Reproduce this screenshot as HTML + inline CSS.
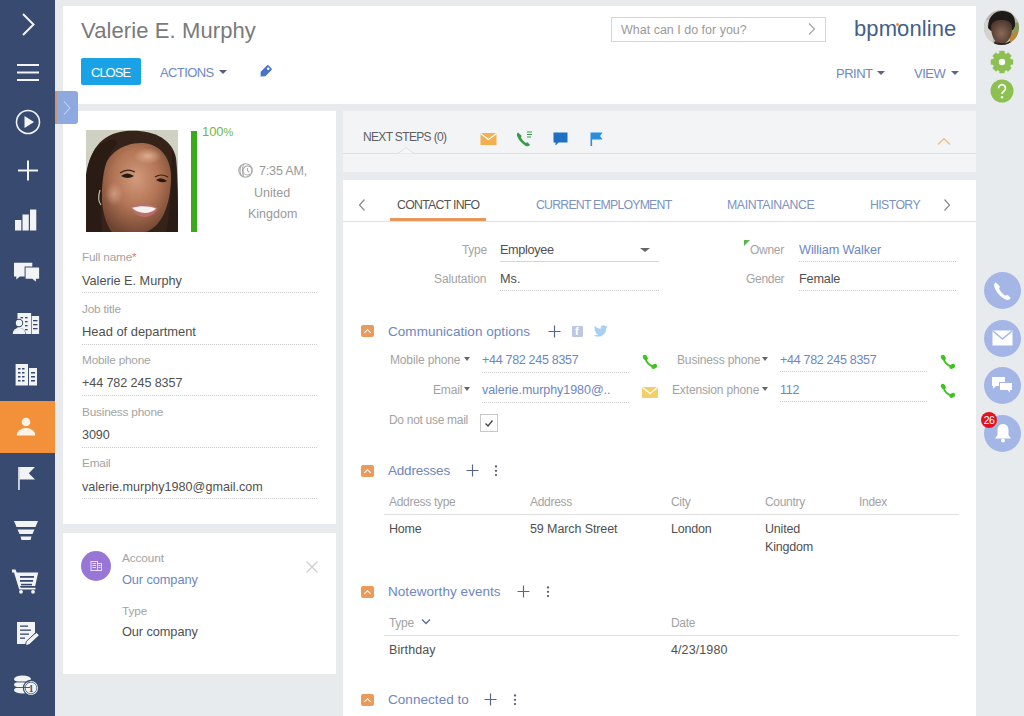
<!DOCTYPE html>
<html><head><meta charset="utf-8">
<style>
*{box-sizing:border-box;margin:0;padding:0}
html,body{width:1024px;height:716px;overflow:hidden}
body{background:#e8ebee;font-family:"Liberation Sans",sans-serif;position:relative;color:#444}
.abs{position:absolute}
.t{position:absolute;white-space:nowrap;line-height:1}
#sb{left:0;top:0;width:55px;height:716px;background:#384a6f}
.panel{position:absolute;background:#fff}
.lbl{color:#a3a3a3}
.val{color:#505050}
.lnk{color:#6d87bf}
.dot{position:absolute;height:1px;background-image:linear-gradient(90deg,#c9c9c9 50%,transparent 50%);background-size:2px 1px}
.sol{position:absolute;height:1px;background:#d8d8d8}
.oic{position:absolute;width:13px;height:12px;background:#ea9a5b;border-radius:2px}
.oic:after{content:"";position:absolute;left:4px;top:4.5px;width:4px;height:4px;border-left:1.3px solid #fff;border-top:1.3px solid #fff;transform:rotate(45deg)}
.caret{position:absolute;width:0;height:0;border-left:4px solid transparent;border-right:4px solid transparent;border-top:4px solid #777}
</style></head><body>

<!-- sidebar -->
<div id="sb" class="abs"></div>
<div class="abs" style="left:0;top:401px;width:55px;height:52px;background:#f3913b"></div>
<svg class="abs" style="left:0;top:0" width="55" height="716" viewBox="0 0 55 716">
<g fill="none" stroke="#f2f3f5" stroke-width="2">
<polyline points="23,14 33.5,24.5 23,35"/>
<line x1="17" y1="65" x2="39" y2="65"/><line x1="17" y1="72.5" x2="39" y2="72.5"/><line x1="17" y1="80" x2="39" y2="80"/>
<circle cx="28" cy="122" r="11.5" stroke-width="1.6"/>
<line x1="18" y1="170.5" x2="38" y2="170.5"/><line x1="28" y1="160.5" x2="28" y2="180.5"/>
</g>
<g fill="#f2f3f5">
<polygon points="24.5,116 34,122 24.5,128"/>
<rect x="15" y="220" width="6.3" height="10.5"/><rect x="22.5" y="214.5" width="6.3" height="16"/><rect x="30" y="209.5" width="6.3" height="21"/>
<!-- chat -->
<path d="M14,262.7 h18.3 v13.7 h-12.5 l-3.5,3 v-3 h-2.3z"/>
<path d="M24.6,266.5 h15.5 v13.2 h-3.2 v3 l-3.5,-3 h-8.8z" fill="#384a6f"/>
<path d="M25.6,267.5 h13.5 v11.2 h-3.2 v3 l-3.5,-3 h-6.8z"/>
<!-- contacts -->
<rect x="17.5" y="313" width="13.6" height="21"/><rect x="31.7" y="316" width="7.4" height="18"/>
<circle cx="19" cy="323" r="4.2" fill="#384a6f"/>
<path d="M11.8,335 a7.2,7.2 0 0 1 14.4,0z" fill="#384a6f"/>
<circle cx="19" cy="323" r="3.2"/>
<path d="M12.8,334 a6.2,6.2 0 0 1 12.4,0z"/>
<!-- buildings -->
<rect x="15.6" y="364" width="12.5" height="21.5"/><rect x="29" y="368" width="8" height="17.5"/>
<!-- flag -->
<rect x="18.2" y="467" width="1.5" height="23"/>
<polygon points="19.5,467 35,467 28.8,473.2 35,479.5 19.5,479.5"/>
<!-- funnel -->
<polygon points="14,521 38,521 35.5,527 16.5,527"/>
<polygon points="17.5,529.5 34.5,529.5 32.5,534 19.5,534"/>
<polygon points="20.5,536.5 31.5,536.5 30.5,540 21.5,540"/>
<!-- cart -->
<path d="M12,569.5 h3.5 l1.2,3 h21.5 l-3,13.5 h-15.2 l0.7,1.8 h14.8 v1.7 h-16.3 l-5.2,-17 h-2z"/>
<circle cx="21" cy="591.8" r="1.9"/><circle cx="33" cy="591.8" r="1.9"/>
<!-- doc -->
<path d="M17,622 h18 v12 l-8,9 v1 h-10z"/>
<path d="M26,645.5 l1.2,-3.8 9.5,-9 2.4,2.4 -9.5,9z"/>
<!-- coins -->
<ellipse cx="22.5" cy="679" rx="8.5" ry="3.6"/><ellipse cx="22.5" cy="684.5" rx="8.5" ry="3.6"/><ellipse cx="22.5" cy="690" rx="8.5" ry="3.6"/>
<circle cx="31" cy="688" r="8.2" fill="#384a6f"/>
<circle cx="31" cy="688" r="7"/>
</g>
<g fill="#384a6f">
<rect x="20.5" y="317" width="2.6" height="1.3"/><rect x="25" y="317" width="2.6" height="1.3"/><rect x="25" y="321" width="2.6" height="1.3"/><rect x="25" y="325" width="2.6" height="1.3"/><rect x="25" y="329" width="2.6" height="1.3"/>
<rect x="33" y="320" width="4.5" height="1.3"/><rect x="33" y="324" width="4.5" height="1.3"/><rect x="33" y="328" width="4.5" height="1.3"/>
<rect x="18" y="368" width="2.5" height="1.5"/><rect x="22" y="368" width="2.5" height="1.5"/><rect x="18" y="372" width="2.5" height="1.5"/><rect x="22" y="372" width="2.5" height="1.5"/><rect x="18" y="376" width="2.5" height="1.5"/><rect x="22" y="376" width="2.5" height="1.5"/><rect x="18" y="380" width="2.5" height="1.5"/><rect x="22" y="380" width="2.5" height="1.5"/>
<rect x="31" y="372" width="4" height="1.5"/><rect x="31" y="376" width="4" height="1.5"/><rect x="31" y="380" width="4" height="1.5"/>
<rect x="28.1" y="364" width="0.9" height="21.5"/>
<rect x="20" y="576" width="14" height="1.8"/><rect x="20" y="580" width="13" height="1.8"/><rect x="21" y="583.8" width="11" height="1.6"/>
<rect x="20" y="625.5" width="8" height="1.3"/><rect x="20" y="629.5" width="11" height="1.3"/><rect x="20" y="633.5" width="9" height="1.3"/><rect x="20" y="637.5" width="5" height="1.3"/>
<path d="M25.2,646 l1.2,-4.6 9.8,-9.4 3.4,3.4 -9.8,9.4z" fill="none" stroke="#384a6f" stroke-width="0.9"/>
<rect x="14" y="681.5" width="16" height="0.9"/><rect x="14" y="687" width="16" height="0.9"/>
</g>
<circle cx="31" cy="688" r="5.8" fill="none" stroke="#384a6f" stroke-width="0.7"/><text x="31" y="691.5" font-family="Liberation Serif" font-size="9.5" font-weight="bold" fill="#384a6f" text-anchor="middle">1</text>
<g fill="#fbf3ea">
<circle cx="26" cy="422" r="4.3"/>
<path d="M16.7,435.6 a9.3,7.5 0 0 1 18.6,0z"/>
</g>
</svg>


<!-- header panel -->
<div class="panel" style="left:63px;top:6px;width:913px;height:98px"></div>
<div class="t" style="left:81px;top:20px;font-size:22px;color:#7a7a7a;letter-spacing:0.1px">Valerie E. Murphy</div>
<div class="abs" style="left:81px;top:58px;width:60px;height:27px;background:#1aa2e6;border-radius:2px"></div>
<div class="t" style="left:91px;top:66px;font-size:13px;color:#fff;letter-spacing:-1px">CLOSE</div>
<div class="t" style="left:160px;top:66px;font-size:13px;color:#6f88bd;letter-spacing:-0.6px">ACTIONS</div>
<div class="caret" style="left:219px;top:70px;border-top-color:#585f74"></div>
<svg class="abs" style="left:257px;top:63px" width="17" height="17" viewBox="0 0 17 17"><g transform="rotate(45 8.5 8.5)"><path d="M5.2,3.5 a1.5,1.5 0 0 1 1.5,-1.5 h3.6 a1.5,1.5 0 0 1 1.5,1.5 v8.5 l-3.3,3.5 -3.3,-3.5z" fill="#4a72c8"/></g><circle cx="11.2" cy="5.8" r="1.3" fill="#fff"/></svg>
<!-- search -->
<div class="abs" style="left:611px;top:17px;width:215px;height:25px;border:1px solid #d6d6d6"></div>
<div class="t" style="left:621px;top:24px;font-size:12.5px;color:#9a9a9a;letter-spacing:0px">What can I do for you?</div>
<svg class="abs" style="left:806px;top:22px" width="12" height="14" viewBox="0 0 12 14"><polyline points="3,1.5 8.5,7 3,12.5" fill="none" stroke="#a5a5a5" stroke-width="1.2"/></svg>
<div class="t" style="left:854px;top:18px;font-size:22px;color:#43608a;letter-spacing:0.1px">bpmonline</div>
<div class="abs" style="left:896px;top:23px;width:3px;height:3px;border-radius:50%;background:#f0913e"></div>
<div class="t" style="left:836px;top:67px;font-size:13px;color:#6f88bd;letter-spacing:-0.5px">PRINT</div>
<div class="caret" style="left:877px;top:71px;border-top-color:#5f6678"></div>
<div class="t" style="left:914px;top:67px;font-size:13px;color:#6f88bd;letter-spacing:-0.5px">VIEW</div>
<div class="caret" style="left:951px;top:71px;border-top-color:#5f6678"></div>

<!-- right column -->
<svg class="abs" style="left:984px;top:10px" width="35" height="35" viewBox="0 0 35 35"><defs><clipPath id="ac"><circle cx="17.5" cy="17.5" r="17.5"/></clipPath><radialGradient id="af" cx="0.5" cy="0.55" r="0.6"><stop offset="0" stop-color="#8a6a5a"/><stop offset="1" stop-color="#4a342a"/></radialGradient></defs><g clip-path="url(#ac)"><rect width="35" height="35" fill="#b8b6ae"/><rect x="0" y="10" width="9" height="25" fill="#d4d2cc"/><path d="M27,14 L35,12 L35,35 L27,35z" fill="#8a9a5a"/><path d="M26,24 L33,22 L33,32 L26,34z" fill="#b8883a"/><path d="M4,18 C4,5 12,1 18,1 C27,1 32,6 31,16 L29,20 L7,21z" fill="#1e1a18"/><path d="M7,16 C8,11 13,10 18,10 C24,10 28,12 28,18 C28,27 24,33 18,34 C12,34 7,28 7,16z" fill="url(#af)"/><path d="M9,35 L11,31 C14,34 22,34 26,31 L28,35z" fill="#2a2422"/></g></svg>
<svg class="abs" style="left:990px;top:50px" width="24" height="24" viewBox="0 0 24 24"><g fill="#8cc152"><circle cx="12" cy="12" r="9.3"/><rect x="9.3" y="0.8" width="5.4" height="22.4" rx="0.8"/><rect x="0.8" y="9.3" width="22.4" height="5.4" rx="0.8"/><rect x="9.3" y="0.8" width="5.4" height="22.4" rx="0.8" transform="rotate(45 12 12)"/><rect x="9.3" y="0.8" width="5.4" height="22.4" rx="0.8" transform="rotate(-45 12 12)"/></g><circle cx="12" cy="12" r="3.2" fill="#fff"/></svg>
<svg class="abs" style="left:990px;top:79px" width="24" height="24" viewBox="0 0 24 24"><circle cx="12" cy="12" r="11.5" fill="#8cc152"/><path d="M8.5,9.2 a3.5,3.5 0 1 1 5.3,3 c-1.1,0.7 -1.8,1.3 -1.8,2.8" fill="none" stroke="#fff" stroke-width="1.7"/><circle cx="12" cy="18.3" r="1.2" fill="#fff"/></svg>

<!-- left card 1 -->
<div class="panel" style="left:63px;top:111px;width:273px;height:413px"></div>
<svg class="abs" style="left:86px;top:130px" width="92" height="102" viewBox="0 0 92 102">
<defs>
<radialGradient id="fg" cx="0.5" cy="0.4" r="0.65"><stop offset="0" stop-color="#d29a7c"/><stop offset="0.5" stop-color="#b27555"/><stop offset="1" stop-color="#6e4230"/></radialGradient>
<radialGradient id="hl" cx="0.5" cy="0.5" r="0.5"><stop offset="0" stop-color="#e8b8a0" stop-opacity="0.8"/><stop offset="1" stop-color="#e8b8a0" stop-opacity="0"/></radialGradient>
</defs>
<rect width="92" height="102" fill="#cfd1c2"/>
<path d="M0,102 L0,50 C3,20 14,4 40,1 C66,-1 86,8 90,28 C92,45 92,75 92,102z" fill="#35231a"/>
<path d="M16,48 C18,26 34,13 56,13 C76,14 86,30 85,50 C84,76 76,96 60,102 L26,102 C18,92 14,72 16,48z" fill="url(#fg)"/>
<ellipse cx="62" cy="26" rx="14" ry="8" fill="url(#hl)"/>
<ellipse cx="28" cy="64" rx="9" ry="12" fill="url(#hl)" opacity="0.7"/>
<path d="M0,102 L0,45 C3,25 10,14 24,10 C30,9 34,12 28,18 C18,30 14,50 16,102z" fill="#2a1b14"/>
<path d="M86,20 C90,30 92,50 92,102 L80,102 C84,85 86,60 86,20z" fill="#2a1b14"/>
<path d="M35,46 q6,-5 13,0 q-6,4 -13,0z" fill="#2a1812"/><path d="M34,43 q7,-5 15,-1" fill="none" stroke="#3a2418" stroke-width="1.2"/>
<path d="M70,50 q5,-4 11,1 q-5,3 -11,-1z" fill="#2a1812"/><path d="M69,47 q6,-4 13,0" fill="none" stroke="#3a2418" stroke-width="1.2"/>
<path d="M44,77 C52,73 64,73 72,78 C67,90 50,90 44,77z" fill="#b8706a"/>
<path d="M46,77.8 C53,75.5 63,75.5 70,78.5 C65,84.5 52,84.5 46,77.8z" fill="#f6f0ee"/>
<path d="M14,60 q-3,10 1,15" fill="none" stroke="#c8beb0" stroke-width="1.2"/>
</svg>

<div class="abs" style="left:191px;top:131px;width:6px;height:101px;background:#3aaa1c"></div>
<div class="t" style="left:202px;top:125px;font-size:13px;color:#72b84a;letter-spacing:-0.1px">100<span style="font-size:11px">%</span></div>
<svg class="abs" style="left:238px;top:163px" width="16" height="15" viewBox="0 0 16 15"><g fill="none" stroke="#a9a9a9" stroke-width="1.1"><circle cx="7.5" cy="7.5" r="6.7"/><path d="M3,3 q-2,4.5 0,9 M5.5,1.5 q-2,6 0,12"/><circle cx="9.5" cy="7.5" r="4.5"/><path d="M9.5,5 v2.8 l1.8,1.2"/></g></svg>
<div class="t" style="left:259px;top:165px;font-size:12.5px;color:#999;letter-spacing:-0.15px">7:35 AM,</div>
<div class="t" style="left:254px;top:186.5px;font-size:12.5px;color:#999">United</div>
<div class="t" style="left:248px;top:208px;font-size:12.5px;color:#999">Kingdom</div>

<div class="t lbl" style="left:82px;top:252.3px;font-size:11.8px;letter-spacing:-0.2px">Full name<span style="color:#e07a7a">*</span></div>
<div class="t val" style="left:82px;top:274.5px;font-size:12.7px;letter-spacing:0px">Valerie E. Murphy</div>
<div class="dot" style="left:82px;top:292px;width:236px"></div>
<div class="t lbl" style="left:82px;top:303.6px;font-size:11.8px;letter-spacing:-0.2px">Job title</div>
<div class="t val" style="left:82px;top:325.6px;font-size:12.9px;letter-spacing:0px">Head of department</div>
<div class="dot" style="left:82px;top:344px;width:236px"></div>
<div class="t lbl" style="left:82px;top:355.2px;font-size:11.8px;letter-spacing:-0.2px">Mobile phone</div>
<div class="t val" style="left:82px;top:377px;font-size:12.6px;letter-spacing:-0.1px">+44 782 245 8357</div>
<div class="dot" style="left:82px;top:395px;width:236px"></div>
<div class="t lbl" style="left:82px;top:406.6px;font-size:11.8px;letter-spacing:-0.2px">Business phone</div>
<div class="t val" style="left:82px;top:429.4px;font-size:12.6px;letter-spacing:-0.1px">3090</div>
<div class="dot" style="left:82px;top:447px;width:236px"></div>
<div class="t lbl" style="left:82px;top:458px;font-size:11.8px;letter-spacing:-0.2px">Email</div>
<div class="t val" style="left:82px;top:480.7px;font-size:12.6px;letter-spacing:0px">valerie.murphy1980@gmail.com</div>
<div class="dot" style="left:82px;top:498px;width:236px"></div>

<!-- left card 2 -->
<div class="panel" style="left:63px;top:533px;width:273px;height:141px"></div>
<div class="abs" style="left:81px;top:551px;width:30px;height:30px;border-radius:50%;background:#9776d6"></div>
<svg class="abs" style="left:88px;top:558px" width="16" height="16" viewBox="0 0 16 16"><g fill="none" stroke="#e8e0f4" stroke-width="1"><rect x="3" y="3.5" width="6.5" height="9"/><rect x="9.5" y="5.5" width="4" height="7"/><path d="M4.5,5.5h3.5M4.5,7.5h3.5M4.5,9.5h3.5M10.5,7.5h2M10.5,9.5h2"/></g></svg>
<div class="t lbl" style="left:122px;top:553px;font-size:11.8px;letter-spacing:-0.1px">Account</div>
<div class="t lnk" style="left:122px;top:574px;font-size:12.8px;letter-spacing:-0.1px">Our company</div>
<svg class="abs" style="left:305px;top:560px" width="14" height="14" viewBox="0 0 14 14"><path d="M1.5,1.5 L12.5,12.5 M12.5,1.5 L1.5,12.5" stroke="#cdcdcd" stroke-width="1.2"/></svg>
<div class="t lbl" style="left:122px;top:605.5px;font-size:11.8px;letter-spacing:-0.1px">Type</div>
<div class="t val" style="left:122px;top:626px;font-size:12.8px;letter-spacing:-0.1px">Our company</div>

<!-- blue expand tab -->
<div class="abs" style="left:55px;top:91px;width:23px;height:33px;background:#8ea8e0;border-radius:0 3px 3px 0"></div>
<div class="abs" style="left:55px;top:91px;width:2px;height:33px;background:#c9967a"></div>
<svg class="abs" style="left:60px;top:100px" width="14" height="16" viewBox="0 0 14 16"><polyline points="4,1.5 10,8 4,14.5" fill="none" stroke="#c5d3f2" stroke-width="1.1"/></svg>

<!-- next steps panel -->
<div class="abs" style="left:343px;top:111px;width:633px;height:61px;background:#f3f4f6"></div>
<div class="sol" style="left:343px;top:153px;width:633px;background:#dcdfe3"></div>
<svg class="abs" style="left:398px;top:147px" width="16" height="8" viewBox="0 0 16 8"><path d="M0,6.5 L8,0.5 L16,6.5" fill="#f6f7f9" stroke="#dcdfe3" stroke-width="1"/></svg>
<div class="t" style="left:363px;top:131px;font-size:12px;color:#5e5e5e;letter-spacing:-0.65px">NEXT STEPS (0)</div>
<svg class="abs" style="left:480px;top:132px" width="17" height="13" viewBox="0 0 17 13"><rect x="0.5" y="1" width="16" height="12" fill="#f4b04f"/><polyline points="0.5,1.5 8.5,7.5 16.5,1.5" fill="none" stroke="#fff" stroke-width="1.2"/></svg>
<svg class="abs" style="left:516px;top:131px" width="17" height="16" viewBox="0 0 17 16"><path d="M2,1.5 c-1.5,1 -1.5,3 0,5.5 c2,3.5 4.5,6 7.5,7.8 c2,1 3.5,0.5 4.5,-1 l-2.5,-2.5 c-0.8,0.5 -1.5,0.8 -2.3,0.3 c-1.5,-1 -3,-2.8 -4,-4.5 c-0.3,-0.8 0,-1.5 0.6,-2z" fill="#3a9a4a"/><path d="M11,1 h5 M11,3.5 h5 M11,6 h4" stroke="#3a9a4a" stroke-width="1.2"/></svg>
<svg class="abs" style="left:553px;top:132px" width="15" height="14" viewBox="0 0 15 14"><path d="M0.5,0.5 h14 v10 h-9 l-3,3 v-3 h-2z" fill="#1f6fc4"/></svg>
<svg class="abs" style="left:590px;top:132px" width="13" height="14" viewBox="0 0 13 14"><rect x="0.5" y="0.5" width="1.6" height="13.5" fill="#2a8ee0"/><path d="M2,0.5 h10.5 l-2.5,3.5 2.5,3.5 h-10.5z" fill="#2a8ee0"/></svg>
<svg class="abs" style="left:937px;top:137px" width="14" height="9" viewBox="0 0 14 9"><polyline points="1,7.5 7,1.5 13,7.5" fill="none" stroke="#f3b878" stroke-width="1.2"/></svg>

<!-- tab panel -->
<div class="panel" style="left:343px;top:180px;width:633px;height:536px"></div>
<div class="sol" style="left:343px;top:221px;width:633px;background:#dfe2e6"></div>
<div class="abs" style="left:390px;top:218px;width:96px;height:3px;background:#e8955a"></div>
<svg class="abs" style="left:357px;top:198px" width="10" height="14" viewBox="0 0 10 14"><polyline points="7.5,1.5 2.5,7 7.5,12.5" fill="none" stroke="#8a8a8a" stroke-width="1.2"/></svg>
<svg class="abs" style="left:942px;top:198px" width="10" height="14" viewBox="0 0 10 14"><polyline points="2.5,1.5 7.5,7 2.5,12.5" fill="none" stroke="#8a8a8a" stroke-width="1.2"/></svg>
<div class="t" style="left:397px;top:199px;font-size:12.3px;color:#555;letter-spacing:-0.72px">CONTACT INFO</div>
<div class="t" style="left:536px;top:199px;font-size:12.3px;letter-spacing:-0.78px;color:#7c92c2">CURRENT EMPLOYMENT</div>
<div class="t" style="left:727px;top:199px;font-size:12.3px;letter-spacing:-0.4px;color:#7c92c2">MAINTAINANCE</div>
<div class="t" style="left:870px;top:199px;font-size:12.3px;letter-spacing:-0.6px;color:#7c92c2">HISTORY</div>

<!-- main fields -->
<div class="t lbl" style="left:462px;top:243.5px;font-size:12px;letter-spacing:-0.3px">Type</div>
<div class="t val" style="left:500px;top:243.5px;font-size:12.7px;letter-spacing:-0.35px">Employee</div>
<div class="caret" style="left:640px;top:248px;border-left-width:5px;border-right-width:5px;border-top:4px solid #666"></div>
<div class="sol" style="left:500px;top:261px;width:159px;background:#d6d6d6"></div>
<div class="t lbl" style="left:434px;top:272.5px;font-size:12px;letter-spacing:-0.1px">Salutation</div>
<div class="t val" style="left:500px;top:272.5px;font-size:12.7px">Ms.</div>
<div class="dot" style="left:500px;top:290px;width:159px"></div>

<div class="abs" style="left:744px;top:240px;width:0;height:0;border-top:6px solid #5cb54a;border-right:6px solid transparent"></div>
<div class="t lbl" style="left:750px;top:243.5px;font-size:12px;letter-spacing:-0.3px">Owner</div>
<div class="t lnk" style="left:799px;top:243.5px;font-size:12.7px;letter-spacing:-0.1px">William Walker</div>
<div class="dot" style="left:799px;top:261px;width:158px"></div>
<div class="t lbl" style="left:746px;top:272.5px;font-size:12px;letter-spacing:-0.3px">Gender</div>
<div class="t val" style="left:799px;top:272.5px;font-size:12.7px;letter-spacing:-0.2px">Female</div>
<div class="dot" style="left:799px;top:290px;width:158px"></div>

<!-- communication options -->
<div class="oic" style="left:361px;top:325px"></div>
<div class="t lnk" style="left:388px;top:325px;font-size:13.5px;letter-spacing:0.05px">Communication options</div>
<svg class="abs" style="left:548px;top:325px" width="13" height="13" viewBox="0 0 13 13"><path d="M6.5,0.5 v12 M0.5,6.5 h12" stroke="#56668a" stroke-width="1.15"/></svg>
<div class="abs" style="left:572px;top:326px;width:11px;height:11px;background:#bcc8e2;border-radius:1px"></div>
<div class="t" style="left:575px;top:326px;font-size:11px;font-weight:bold;color:#fff">f</div>
<svg class="abs" style="left:594px;top:325px" width="14" height="12" viewBox="0 0 24 20"><path d="M23.6,2.4c-0.9,0.4-1.8,0.6-2.8,0.8c1-0.6,1.8-1.6,2.1-2.7c-0.9,0.6-2,1-3.1,1.2C18.9,0.7,17.6,0,16.2,0c-2.7,0-4.9,2.2-4.9,4.9c0,0.4,0,0.8,0.1,1.1C7.3,5.8,3.7,3.9,1.3,0.9C0.9,1.6,0.6,2.5,0.6,3.4c0,1.7,0.9,3.2,2.2,4.1C2,7.5,1.2,7.3,0.6,6.9v0.1c0,2.4,1.7,4.4,3.9,4.8c-0.4,0.1-0.8,0.2-1.3,0.2c-0.3,0-0.6,0-0.9-0.1c0.6,2,2.4,3.4,4.6,3.4c-1.7,1.3-3.8,2.1-6.1,2.1c-0.4,0-0.8,0-1.2-0.1C1.8,18.8,4.4,19.6,7.1,19.6c9,0,14-7.5,14-14l0-0.6C22.1,4.3,22.9,3.4,23.6,2.4z" fill="#a8d0f0"/></svg>

<div class="t lbl" style="left:390px;top:354px;font-size:12px;letter-spacing:-0.15px">Mobile phone</div>
<div class="caret" style="left:464px;top:357px;border-left-width:3.5px;border-right-width:3.5px;border-top:4px solid #666"></div>
<div class="t lnk" style="left:482px;top:354px;font-size:12.5px;letter-spacing:-0.3px">+44 782 245 8357</div>
<div class="dot" style="left:482px;top:372px;width:148px"></div>
<svg class="abs" style="left:642px;top:354px" width="16" height="16" viewBox="0 0 16 16"><g fill="#3ec422"><path d="M3.6,4.5 Q5,10.8 11.6,12.4" fill="none" stroke="#3ec422" stroke-width="1.8"/><ellipse cx="3.3" cy="3.6" rx="2.2" ry="3" transform="rotate(-30 3.3 3.6)"/><ellipse cx="12.2" cy="12.4" rx="3" ry="2.2" transform="rotate(-30 12.2 12.4)"/></g></svg>
<div class="t lbl" style="left:433px;top:384px;font-size:12px;letter-spacing:-0.15px">Email</div>
<div class="caret" style="left:464px;top:387px;border-left-width:3.5px;border-right-width:3.5px;border-top:4px solid #666"></div>
<div class="t lnk" style="left:482px;top:384px;font-size:12.5px;letter-spacing:-0.05px">valerie.murphy1980@..</div>
<div class="dot" style="left:482px;top:402px;width:148px"></div>
<svg class="abs" style="left:642px;top:387px" width="16" height="12" viewBox="0 0 16 12"><rect x="0" y="0" width="16" height="11" fill="#f3cf6a"/><polyline points="0.5,0.5 8,6.5 15.5,0.5" fill="none" stroke="#fff" stroke-width="1.2"/></svg>
<div class="t lbl" style="left:389px;top:414px;font-size:12px;letter-spacing:-0.3px">Do not use mail</div>
<div class="abs" style="left:480px;top:414px;width:18px;height:18px;border:1px solid #c8c8c8;background:#fff"></div>
<svg class="abs" style="left:484px;top:418px" width="10" height="10" viewBox="0 0 10 10"><polyline points="1.5,5.5 4,8 8.5,2.5" fill="none" stroke="#444" stroke-width="1.3"/></svg>

<div class="t lbl" style="left:677px;top:354px;font-size:12px;letter-spacing:-0.15px">Business phone</div>
<div class="caret" style="left:762px;top:357px;border-left-width:3.5px;border-right-width:3.5px;border-top:4px solid #666"></div>
<div class="t lnk" style="left:780px;top:354px;font-size:12.5px;letter-spacing:-0.3px">+44 782 245 8357</div>
<div class="dot" style="left:780px;top:371px;width:148px"></div>
<svg class="abs" style="left:940px;top:354px" width="16" height="16" viewBox="0 0 16 16"><g fill="#3ec422"><path d="M3.6,4.5 Q5,10.8 11.6,12.4" fill="none" stroke="#3ec422" stroke-width="1.8"/><ellipse cx="3.3" cy="3.6" rx="2.2" ry="3" transform="rotate(-30 3.3 3.6)"/><ellipse cx="12.2" cy="12.4" rx="3" ry="2.2" transform="rotate(-30 12.2 12.4)"/></g></svg>
<div class="t lbl" style="left:672px;top:384px;font-size:12px;letter-spacing:-0.15px">Extension phone</div>
<div class="caret" style="left:762px;top:387px;border-left-width:3.5px;border-right-width:3.5px;border-top:4px solid #666"></div>
<div class="t lnk" style="left:780px;top:384px;font-size:12.5px;letter-spacing:-0.3px">112</div>
<div class="dot" style="left:780px;top:401px;width:148px"></div>
<svg class="abs" style="left:940px;top:383px" width="16" height="16" viewBox="0 0 16 16"><g fill="#3ec422"><path d="M3.6,4.5 Q5,10.8 11.6,12.4" fill="none" stroke="#3ec422" stroke-width="1.8"/><ellipse cx="3.3" cy="3.6" rx="2.2" ry="3" transform="rotate(-30 3.3 3.6)"/><ellipse cx="12.2" cy="12.4" rx="3" ry="2.2" transform="rotate(-30 12.2 12.4)"/></g></svg>

<!-- addresses -->
<div class="oic" style="left:361px;top:465px"></div>
<div class="t lnk" style="left:388px;top:464px;font-size:13.5px;letter-spacing:-0.2px">Addresses</div>
<svg class="abs" style="left:466px;top:464px" width="13" height="13" viewBox="0 0 13 13"><path d="M6.5,0.5 v12 M0.5,6.5 h12" stroke="#56668a" stroke-width="1.15"/></svg>
<svg class="abs" style="left:493.5px;top:464px" width="4" height="13" viewBox="0 0 4 13"><g fill="#5a6070"><circle cx="2" cy="2.5" r="1.15"/><circle cx="2" cy="6.8" r="1.15"/><circle cx="2" cy="11.1" r="1.15"/></g></svg>
<div class="t lbl" style="left:389px;top:496px;font-size:12px;letter-spacing:-0.3px">Address type</div>
<div class="t lbl" style="left:530px;top:496px;font-size:12px;letter-spacing:-0.3px">Address</div>
<div class="t lbl" style="left:671px;top:496px;font-size:12px;letter-spacing:-0.3px">City</div>
<div class="t lbl" style="left:765px;top:496px;font-size:12px;letter-spacing:-0.3px">Country</div>
<div class="t lbl" style="left:859px;top:496px;font-size:12px;letter-spacing:-0.3px">Index</div>
<div class="sol" style="left:384px;top:514px;width:575px;background:#e0e0e0"></div>
<div class="t val" style="left:389px;top:523px;font-size:12.5px;letter-spacing:-0.2px">Home</div>
<div class="t val" style="left:530px;top:523px;font-size:12.5px;letter-spacing:-0.1px">59 March Street</div>
<div class="t val" style="left:671px;top:523px;font-size:12.5px;letter-spacing:-0.2px">London</div>
<div class="t val" style="left:765px;top:523px;font-size:12.5px;letter-spacing:-0.2px">United</div>
<div class="t val" style="left:765px;top:541px;font-size:12.5px;letter-spacing:-0.2px">Kingdom</div>

<!-- noteworthy -->
<div class="oic" style="left:361px;top:586px"></div>
<div class="t lnk" style="left:388px;top:585px;font-size:13.5px;letter-spacing:0.05px">Noteworthy events</div>
<svg class="abs" style="left:517px;top:585px" width="13" height="13" viewBox="0 0 13 13"><path d="M6.5,0.5 v12 M0.5,6.5 h12" stroke="#56668a" stroke-width="1.15"/></svg>
<svg class="abs" style="left:545.5px;top:585px" width="4" height="13" viewBox="0 0 4 13"><g fill="#5a6070"><circle cx="2" cy="2.5" r="1.15"/><circle cx="2" cy="6.8" r="1.15"/><circle cx="2" cy="11.1" r="1.15"/></g></svg>
<div class="t lbl" style="left:389px;top:617px;font-size:12px;letter-spacing:-0.3px">Type</div>
<svg class="abs" style="left:421px;top:618px" width="10" height="7" viewBox="0 0 10 7"><polyline points="1,1.5 5,5.5 9,1.5" fill="none" stroke="#5a6f9c" stroke-width="1.4"/></svg>
<div class="t lbl" style="left:671px;top:617px;font-size:12px;letter-spacing:-0.3px">Date</div>
<div class="sol" style="left:384px;top:635px;width:575px;background:#e0e0e0"></div>
<div class="t val" style="left:389px;top:644px;font-size:12.5px;letter-spacing:0.1px">Birthday</div>
<div class="t val" style="left:671px;top:644px;font-size:12.5px;letter-spacing:0.1px">4/23/1980</div>

<!-- connected to -->
<div class="oic" style="left:361px;top:694px"></div>
<div class="t lnk" style="left:388px;top:693px;font-size:13.5px;letter-spacing:0.05px">Connected to</div>
<svg class="abs" style="left:484px;top:693px" width="13" height="13" viewBox="0 0 13 13"><path d="M6.5,0.5 v12 M0.5,6.5 h12" stroke="#56668a" stroke-width="1.15"/></svg>
<svg class="abs" style="left:512.5px;top:693px" width="4" height="13" viewBox="0 0 4 13"><g fill="#5a6070"><circle cx="2" cy="2.5" r="1.15"/><circle cx="2" cy="6.8" r="1.15"/><circle cx="2" cy="11.1" r="1.15"/></g></svg>

<!-- floating circles -->
<div class="abs" style="left:984px;top:272px;width:37px;height:37px;border-radius:50%;background:#a4b6e6"></div>
<svg class="abs" style="left:993px;top:281px" width="20" height="20" viewBox="0 0 16 16"><path d="M2.2,1 c-1.6,1 -1.8,3 -0.3,5.7 c2,3.6 4.6,6.2 7.7,7.9 c2.1,1 3.6,0.5 4.6,-1 l-2.6,-2.6 c-0.8,0.5 -1.6,0.8 -2.4,0.3 c-1.6,-1 -3.1,-2.9 -4.1,-4.6 c-0.3,-0.8 0,-1.6 0.6,-2.1z" fill="#fff"/></svg>
<div class="abs" style="left:984px;top:320px;width:37px;height:37px;border-radius:50%;background:#a4b6e6"></div>
<svg class="abs" style="left:992px;top:330px" width="21" height="16" viewBox="0 0 21 16"><rect x="0.5" y="0.5" width="20" height="15" fill="#fff"/><polyline points="1,1 10.5,9 20,1" fill="none" stroke="#a4b6e6" stroke-width="1.5"/></svg>
<div class="abs" style="left:984px;top:367px;width:37px;height:37px;border-radius:50%;background:#a4b6e6"></div>
<svg class="abs" style="left:991px;top:376px" width="23" height="20" viewBox="0 0 23 20"><path d="M1,1 h13 v9 h-9 l-3,3 v-3 h-1z" fill="#fff"/><path d="M8,6 h14 v9 h-2 v3 l-3,-3 h-9z" fill="#a4b6e6"/><path d="M9,7 h12 v7 h-2 v2.5 l-2.5,-2.5 h-7.5z" fill="#fff"/></svg>
<div class="abs" style="left:984px;top:415px;width:37px;height:37px;border-radius:50%;background:#a4b6e6"></div>
<svg class="abs" style="left:993px;top:422px" width="20" height="22" viewBox="0 0 20 22"><path d="M10,2 c-4,0 -5.5,3 -5.5,6.5 v4.5 l-2.5,3.5 h16 l-2.5,-3.5 v-4.5 c0,-3.5 -1.5,-6.5 -5.5,-6.5z" fill="#fff"/><circle cx="10" cy="18.5" r="2" fill="#fff"/></svg>
<div class="abs" style="left:981px;top:412px;width:16px;height:16px;border-radius:50%;background:#e0141e"></div>
<div class="t" style="left:982px;top:415px;width:14px;text-align:center;font-size:10.5px;color:#fff;letter-spacing:-0.5px">26</div>

</body></html>
